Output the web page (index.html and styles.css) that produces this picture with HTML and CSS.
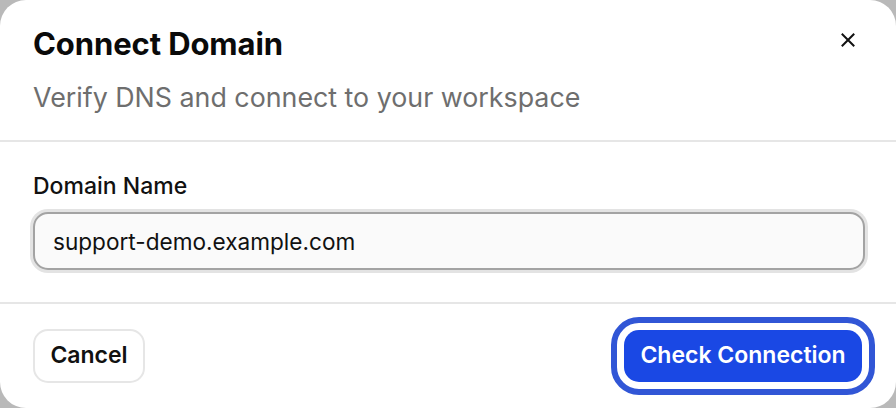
FILE: index.html
```html
<!DOCTYPE html>
<html>
<head>
<meta charset="utf-8">
<link rel="stylesheet" href="styles.css">
</head>
<body>
<div class="dialog">
  <header class="dialog-header">
    <div class="titles">
      <h1 class="title">Connect Domain</h1>
      <p class="subtitle">Verify DNS and connect to your workspace</p>
    </div>
    <button class="close" aria-label="Close">
      <svg width="14" height="14" viewBox="0 0 14 14"><path d="M1.5 1.5L12.5 12.5M12.5 1.5L1.5 12.5" stroke="#111" stroke-width="2" stroke-linecap="square"/></svg>
    </button>
  </header>
  <section class="dialog-body">
    <label class="label" for="domain">Domain Name</label>
    <input id="domain" class="input" type="text" value="support-demo.example.com">
  </section>
  <footer class="dialog-footer">
    <button class="btn btn-secondary">Cancel</button>
    <button class="btn btn-primary">Check Connection</button>
  </footer>
</div>
</body>
</html>
```
FILE: styles.css
```css
* { box-sizing: border-box; }
html, body { margin: 0; padding: 0; }
body {
  width: 896px;
  height: 408px;
  background: #b9b9b9;
  font-family: Inter, "Liberation Sans", sans-serif;
  overflow: hidden;
}
.dialog {
  width: 896px;
  height: 408px;
  background: #fff;
  border-radius: 26px;
  display: flex;
  flex-direction: column;
}
.dialog-header {
  display: flex;
  justify-content: space-between;
  align-items: flex-start;
  padding: 25px 32px 0 33px;
  height: 142px;
  border-bottom: 2px solid #e6e6e6;
}
.title {
  margin: 0;
  font-size: 31px;
  line-height: 38px;
  font-weight: 700;
  color: #0a0a0a;
  letter-spacing: -0.1px;
}
.subtitle {
  margin: 18px 0 0;
  font-size: 26.8px;
  line-height: 32px;
  color: #6e6e6e;
}
.close {
  border: 0;
  background: none;
  padding: 0;
  margin-top: 8px;
  margin-right: 9px;
  width: 14px;
  height: 14px;
  display: flex;
}
.dialog-body {
  height: 162px;
  border-bottom: 2px solid #e6e6e6;
  padding: 29px 32px 0 33px;
  display: flex;
  flex-direction: column;
}
.label {
  font-size: 23px;
  line-height: 30px;
  font-weight: 500;
  color: #111;
}
.input {
  margin-top: 11px;
  width: 832px;
  height: 58px;
  border: 2px solid #a3a3a3;
  box-shadow: 0 0 0 3px #e3e3e3;
  border-radius: 15px;
  background: #fafafa;
  padding: 0 18px;
  font-family: inherit;
  font-size: 22.6px;
  color: #111;
  outline: none;
}
.dialog-footer {
  flex: 1;
  display: flex;
  justify-content: space-between;
  align-items: center;
  padding: 0 34px 0 33px;
}
.btn {
  font-family: inherit;
  font-size: 23px;
  font-weight: 600;
  border-radius: 15px;
  height: 54px;
  padding: 0;
  cursor: pointer;
}
.btn-secondary {
  background: #fff;
  border: 2px solid #e6e6e6;
  color: #111;
  width: 112px;
  padding-bottom: 3px;
}
.btn-primary {
  background: #1a48e4;
  border: 0;
  color: #fff;
  width: 238px;
  height: 52px;
  padding-bottom: 3px;
  outline: 6px solid #3156d6;
  outline-offset: 7px;
  border-radius: 15px;
}
```
